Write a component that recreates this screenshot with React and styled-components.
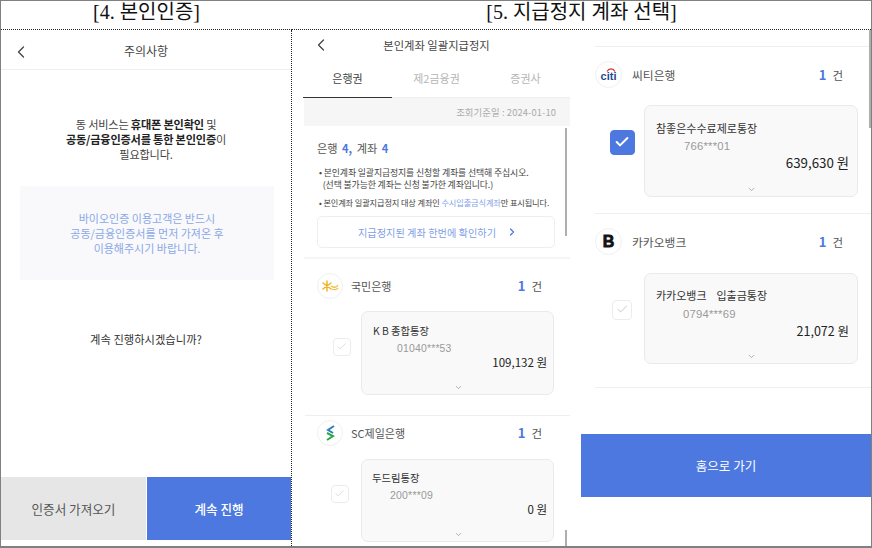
import styled, { createGlobalStyle } from "styled-components";
import { FiChevronLeft, FiChevronRight, FiChevronDown, FiCheck } from "react-icons/fi";

const GlobalStyle = createGlobalStyle`
  html, body { margin: 0; background: #fff; }
  * { box-sizing: border-box; }
  body { font-family: "Noto Sans CJK KR", "Noto Sans", sans-serif; }
`;

const BLUE = "#4c78e0";

const Frame = styled.div`
  width: 872px;
  height: 548px;
  border: 1px solid #808080;
  border-bottom-width: 2px;
  display: grid;
  grid-template-columns: 291px 289px 1fr;
  grid-template-rows: 29px 1fr;
  overflow: hidden;
`;

const Title = styled.h1`
  margin: 0;
  font: 400 20px/22px "Liberation Serif", "Noto Sans CJK KR", serif;
  color: #111;
  text-align: center;
  border-bottom: 1px dotted #222;
  grid-column: ${(p) => p.$col};
`;

const Column = styled.section`
  position: relative;
  display: flex;
  flex-direction: column;
  overflow: hidden;
  min-height: 0;
  border-right: ${(p) => (p.$dotted ? "1px dotted #222" : "none")};
`;

const Header = styled.header`
  position: relative;
  height: ${(p) => p.$h}px;
  padding-top: ${(p) => p.$pt || 0}px;
  flex: none;
  display: flex;
  align-items: center;
  justify-content: center;
  font-size: ${(p) => p.$size}px;
  color: #444;
  border-bottom: ${(p) => (p.$line ? "1px solid #eeeeee" : "none")};
`;

const BackIcon = styled(FiChevronLeft)`
  position: absolute;
  left: ${(p) => p.$left}px;
  top: ${(p) => p.$top}px;
  transform: translateY(-50%);
  width: 20px;
  height: 20px;
  stroke-width: 1.5;
  color: #444;
`;

/* 4. 본인인증 */
const Notice = styled.p`
  margin: 47px 0 0;
  text-align: center;
  font-size: 11.2px;
  line-height: 15px;
  color: #444;
  letter-spacing: -0.2px;
  b { color: #222; font-weight: 700; }
`;

const InfoBox = styled.div`
  margin: 24px 17px 0 19px;
  height: 94px;
  background: #f9f9fb;
  display: flex;
  align-items: center;
  justify-content: center;
  text-align: center;
  font-size: 11px;
  line-height: 15px;
  color: #8aa8e8;
`;

const Question = styled.p`
  margin: 51px 0 0;
  text-align: center;
  font-size: 11.3px;
  line-height: 16px;
  color: #333;
`;

const ButtonRow = styled.div`
  margin-top: auto;
  margin-bottom: 6px;
  display: grid;
  grid-template-columns: 145px 1fr;
  gap: 1px;
  height: 63px;
`;

const BigButton = styled.div`
  display: flex;
  align-items: center;
  justify-content: center;
  font-size: 12.6px;
  font-weight: ${(p) => (p.$primary ? 500 : 400)};
  background: ${(p) => (p.$primary ? BLUE : "#e6e6e6")};
  color: ${(p) => (p.$primary ? "#fff" : "#555")};
`;

/* 5. 지급정지 계좌 선택 */
const Tabs = styled.nav`
  flex: none;
  margin: 0 11px;
  height: 38px;
  display: grid;
  grid-template-columns: repeat(3, 89px);
  background: linear-gradient(#f0f0f0, #f0f0f0) bottom / 100% 1px no-repeat;
`;

const Tab = styled.div`
  display: flex;
  align-items: center;
  justify-content: center;
  padding-bottom: 1px;
  font-size: 11px;
  color: ${(p) => (p.$active ? "#444" : "#b5b5b5")};
  border-bottom: 1px solid ${(p) => (p.$active ? "#333" : "transparent")};
`;

const DateStrip = styled.div`
  flex: none;
  margin: 0 11px 0 12px;
  height: 28px;
  background: #f6f6f6;
  display: flex;
  align-items: center;
  justify-content: flex-end;
  padding-right: 14px;
  font-size: 9.4px;
  letter-spacing: 0.1px;
  color: #aaa;
`;

const Scrollbar = styled.div`
  position: absolute;
  left: ${(p) => p.$left}px;
  top: ${(p) => p.$top}px;
  width: 2px;
  height: ${(p) => p.$h}px;
  background: #aeaeae;
`;

const Summary = styled.div`
  border-bottom: 2px solid #f5f5f5;
  margin: 0 11px 0 12px;
  padding: 0 15px 0 13px;
  height: 133px;
  flex: none;
`;

const Counts = styled.div`
  padding-top: 13px;
  font-size: 11.2px;
  line-height: 18px;
  color: #555;
  b { color: ${BLUE}; font-weight: 700; margin: 0 2px; font-size: 11px; }
`;

const Bullet = styled.p`
  margin: ${(p) => p.$gap}px 0 0 2px;
  font-size: ${(p) => p.$size}px;
  line-height: 12px;
  color: #444;
  white-space: nowrap;
  letter-spacing: -0.12px;
  span { color: #7f9fe6; }
`;

const CheckLink = styled.div`
  margin-top: 8px;
  height: 32px;
  border: 1px solid #eeeeee;
  border-radius: 5px;
  display: flex;
  align-items: center;
  justify-content: center;
  gap: 10px;
  padding-left: 4px;
  font-size: 10.2px;
  color: #7f9fe6;
  svg { width: 12px; height: 12px; stroke-width: 2.5; color: ${BLUE}; }
`;

const Section = styled.div`
  flex: none;
  margin: ${(p) => p.$m};
  padding: ${(p) => p.$p};
  border-top: ${(p) => (p.$lineTop ? "1px solid #efefef" : "none")};
  border-bottom: ${(p) => (p.$line ? "1px solid #efefef" : "none")};
`;

const BankRow = styled.div`
  display: flex;
  align-items: center;
  height: ${(p) => (p.$big ? 27 : 25)}px;
  font-size: ${(p) => (p.$big ? 11.8 : 11)}px;
  color: #555;
`;

const Logo = styled.span`
  flex: none;
  width: ${(p) => (p.$big ? 27 : 26)}px;
  height: ${(p) => (p.$big ? 27 : 26)}px;
  border: 1px solid #f0f0f0;
  border-radius: 50%;
  margin-right: ${(p) => (p.$big ? 10 : 8)}px;
  display: flex;
  align-items: center;
  justify-content: center;
  position: relative;
`;

const CitiText = styled.span`
  font: 700 11px/10px "Liberation Sans", sans-serif;
  color: #1f4a8f;
  margin-top: 3px;
`;

const CitiArc = styled.svg`
  position: absolute;
  left: 10px;
  top: 5px;
`;

const KakaoMark = styled.span`
  font: 900 16px/16px "Liberation Sans", sans-serif;
  color: #111;
  -webkit-text-stroke: 0.8px #111;
`;

const Count = styled.span`
  margin-left: auto;
  margin-right: 28px;
  font-size: 11.5px;
  color: #555;
  b { color: ${BLUE}; font-weight: 700; margin-right: 6px; font-size: 13px; }
`;

const AccountRow = styled.div`
  display: flex;
  align-items: center;
`;

const CheckBox = styled.span`
  flex: none;
  display: flex;
  align-items: center;
  justify-content: center;
  width: ${(p) => p.$size}px;
  height: ${(p) => p.$size}px;
  margin-left: ${(p) => p.$ml}px;
  border-radius: 4px;
  border: 1px solid ${(p) => (p.$on ? BLUE : "#ececec")};
  background: ${(p) => (p.$on ? BLUE : "#fff")};
  svg {
    width: 70%;
    height: 70%;
    stroke-width: ${(p) => (p.$on ? 3 : 2)};
    color: ${(p) => (p.$on ? "#fff" : "#d9d9d9")};
  }
`;

const Card = styled.div`
  position: relative;
  flex: none;
  width: ${(p) => p.$w}px;
  height: ${(p) => p.$h}px;
  margin: ${(p) => p.$mt}px 0 0 ${(p) => p.$gap}px;
  background: #f9f9f9;
  border: 1px solid #eaeaea;
  border-radius: 7px;
  padding: ${(p) => p.$top}px ${(p) => p.$right}px 0 ${(p) => p.$left}px;
`;

const AccountName = styled.div`
  font-size: ${(p) => p.$size}px;
  line-height: 16px;
  color: #333;
  white-space: pre;
`;

const AccountNo = styled.div`
  margin: ${(p) => p.$mt}px 0 0 ${(p) => p.$indent}px;
  font: 400 ${(p) => p.$size}px/15px "Liberation Sans", "Noto Sans", sans-serif;
  letter-spacing: 0.2px;
  color: #999;
`;

const Amount = styled.div`
  margin-top: ${(p) => p.$mt}px;
  text-align: right;
  font-size: ${(p) => p.$size}px;
  line-height: 14px;
  color: #222;
`;

const Expand = styled(FiChevronDown)`
  position: absolute;
  left: 50%;
  bottom: 2px;
  width: 9px;
  height: 9px;
  margin-left: -4px;
  color: #999;
`;

const HomeButton = styled.div`
  flex: none;
  margin-top: 46px;
  height: 63px;
  background: ${BLUE};
  color: #fff;
  display: flex;
  align-items: center;
  justify-content: center;
  font-size: 12.5px;
`;

const KbLogo = () => (
  <svg width="17" height="12" viewBox="0 0 17 12">
    <g stroke="#f2b01e" strokeWidth="1.4" strokeLinecap="round">
      <path d="M5 1v10M1 3l8 6M9 3l-8 6" />
    </g>
    <path d="M9 6c3 2 5 2 7-1M10 9c2 1 5 1 6-1" stroke="#f0c040" strokeWidth="1.3" fill="none" />
  </svg>
);

const ScLogo = () => (
  <svg width="11" height="16" viewBox="0 0 11 16">
    <path d="M9 1 3 5l5 3" stroke="#2d7fc1" strokeWidth="2" fill="none" />
    <path d="M2 8l6 3-6 4" stroke="#2aa84a" strokeWidth="2" fill="none" />
  </svg>
);

const CitiLogo = () => (
  <>
    <CitiArc width="10" height="5" viewBox="0 0 10 5">
      <path d="M1 4.5C3 1 7 1 9 4.5" stroke="#d8232a" strokeWidth="1.2" fill="none" />
    </CitiArc>
    <CitiText>citi</CitiText>
  </>
);

export default function App() {
  return (
    <>
      <GlobalStyle />
      <Frame>
        <Title $col="1">[4. 본인인증]</Title>
        <Title $col="2 / 4">[5. 지급정지 계좌 선택]</Title>

        <Column $dotted>
          <Header $h={40} $pt={2} $size={12} $line>
            <BackIcon $left={10} $top={22} />
            주의사항
          </Header>
          <Notice>
            동 서비스는 <b>휴대폰 본인확인</b> 및<br />
            <b>공동/금융인증서를 통한 본인인증</b>이<br />
            필요합니다.
          </Notice>
          <InfoBox>
            <div>
              바이오인증 이용고객은 반드시<br />
              공동/금융인증서를 먼저 가져온 후<br />
              이용해주시기 바랍니다.
            </div>
          </InfoBox>
          <Question>계속 진행하시겠습니까?</Question>
          <ButtonRow>
            <BigButton>인증서 가져오기</BigButton>
            <BigButton $primary>계속 진행</BigButton>
          </ButtonRow>
        </Column>

        <Column>
          <Header $h={30} $size={11.3}>
            <BackIcon $left={19} $top={15} />
            본인계좌 일괄지급정지
          </Header>
          <Tabs>
            <Tab $active>은행권</Tab>
            <Tab>제2금융권</Tab>
            <Tab>증권사</Tab>
          </Tabs>
          <DateStrip>조회기준일 : 2024-01-10</DateStrip>
          <Summary>
            <Counts>은행 <b>4,</b> 계좌 <b>4</b></Counts>
            <Bullet $gap={10} $size={8.9}>
              • 본인계좌 일괄지급정지를 신청할 계좌를 선택해 주십시오.<br />
              &nbsp;&nbsp;(선택 불가능한 계좌는 신청 불가한 계좌입니다.)
            </Bullet>
            <Bullet $gap={5} $size={8.2}>
              • 본인계좌 일괄지급정지 대상 계좌인 <span>수시입출금식계좌</span>만 표시됩니다.
            </Bullet>
            <CheckLink>
              지급정지된 계좌 한번에 확인하기
              <FiChevronRight />
            </CheckLink>
          </Summary>

          <Section $m="0 11px 0 13px" $p="14px 0 20px 12px" $line>
            <BankRow>
              <Logo><KbLogo /></Logo>
              국민은행
              <Count><b>1</b>건</Count>
            </BankRow>
            <AccountRow>
              <CheckBox $size={18} $ml={16}><FiCheck /></CheckBox>
              <Card $w={193} $h={84} $mt={13} $gap={10} $top={11} $left={11} $right={6}>
                <AccountName $size={10.3}>K B 종합통장</AccountName>
                <AccountNo $size={10.4} $indent={24} $mt={2}>01040***53</AccountNo>
                <Amount $size={11.5} $mt={-1}>109,132 원</Amount>
                <Expand />
              </Card>
            </AccountRow>
          </Section>

          <Section $m="0 11px 0 13px" $p="4px 0 0 12px">
            <BankRow>
              <Logo><ScLogo /></Logo>
              SC제일은행
              <Count><b>1</b>건</Count>
            </BankRow>
            <AccountRow>
              <CheckBox $size={18} $ml={14}><FiCheck /></CheckBox>
              <Card $w={193} $h={83} $mt={14} $gap={12} $top={10} $left={10} $right={6}>
                <AccountName $size={10.3}>두드림통장</AccountName>
                <AccountNo $size={10.5} $indent={18} $mt={2}>200***09</AccountNo>
                <Amount $size={11.5} $mt={-1}>0 원</Amount>
                <Expand />
              </Card>
            </AccountRow>
          </Section>
          <Scrollbar $left={273} $top={98} $h={108} />
          <Scrollbar $left={273} $top={500} $h={18} />
        </Column>

        <Column>
          <Section $m="16px 0 0 14px" $p="14px 0 16px 0" $line $lineTop>
            <BankRow $big>
              <Logo $big><CitiLogo /></Logo>
              씨티은행
              <Count><b>1</b>건</Count>
            </BankRow>
            <AccountRow>
              <CheckBox $size={25} $on $ml={15}><FiCheck /></CheckBox>
              <Card $w={214} $h={92} $mt={17} $gap={9} $top={14} $left={11} $right={8}>
                <AccountName $size={11}>참좋은수수료제로통장</AccountName>
                <AccountNo $size={11.3} $indent={28} $mt={3}>766***01</AccountNo>
                <Amount $size={13.3} $mt={2}>639,630 원</Amount>
                <Expand />
              </Card>
            </AccountRow>
          </Section>
          <Section $m="0 0 0 14px" $p="14px 0 23px 0" $line>
            <BankRow $big>
              <Logo $big><KakaoMark>B</KakaoMark></Logo>
              카카오뱅크
              <Count><b>1</b>건</Count>
            </BankRow>
            <AccountRow>
              <CheckBox $size={20} $ml={17}><FiCheck /></CheckBox>
              <Card $w={214} $h={91} $mt={18} $gap={12} $top={13} $left={11} $right={8}>
                <AccountName $size={11}>카카오뱅크    입출금통장</AccountName>
                <AccountNo $size={11.3} $indent={27} $mt={4}>0794***69</AccountNo>
                <Amount $size={12.5} $mt={2}>21,072 원</Amount>
                <Expand />
              </Card>
            </AccountRow>
          </Section>
          <HomeButton>홈으로 가기</HomeButton>
          <Scrollbar $left={288} $top={0} $h={98} />
        </Column>
      </Frame>
    </>
  );
}
